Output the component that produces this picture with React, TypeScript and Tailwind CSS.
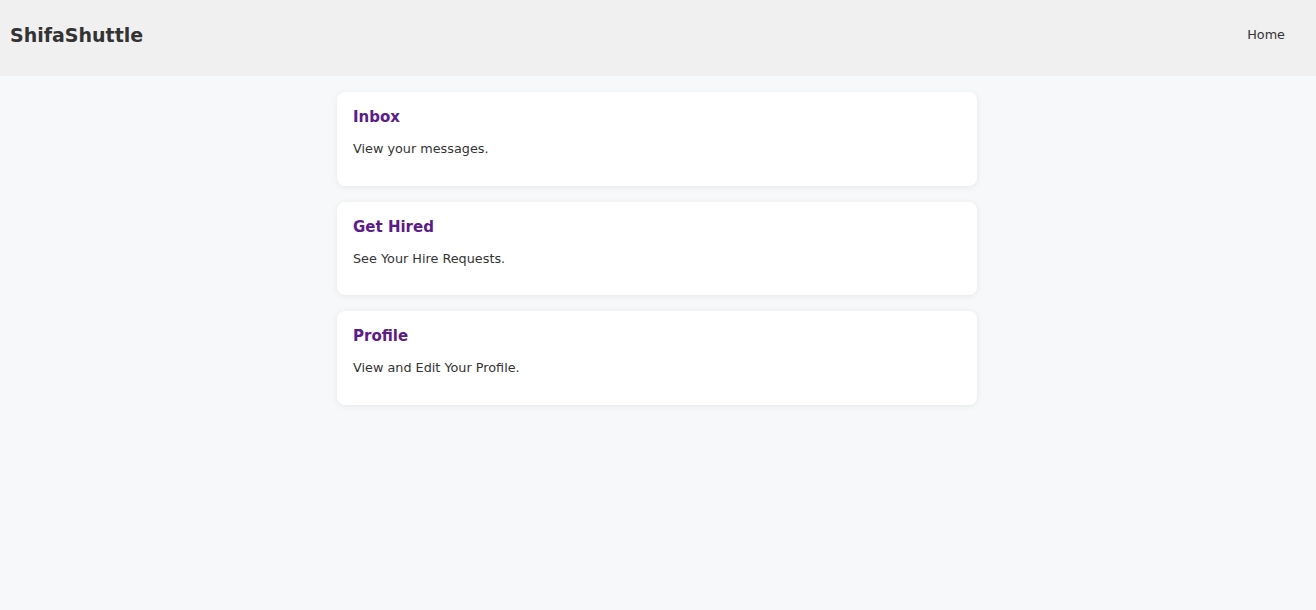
const cards = [
  { title: "Inbox", text: "View your messages." },
  { title: "Get Hired", text: "See Your Hire Requests." },
  { title: "Profile", text: "View and Edit Your Profile." },
];

export default function App() {
  return (
    <div className="min-h-screen bg-[#f7f8fa] font-['DejaVu_Sans',sans-serif] text-[#333]">
      {/* Top bar */}
      <header className="h-[76px] bg-[#f0f0f0]">
        <div className="flex h-[70px] items-center justify-between pl-[10px] pr-[31px]">
          <span className="text-[19px] font-bold text-[#333]">ShifaShuttle</span>
          <a href="#" className="text-[12.8px] text-[#333]">
            Home
          </a>
        </div>
      </header>

      {/* Dashboard cards */}
      <main className="mx-auto flex w-[642px] flex-col gap-4 pt-4">
        {cards.map((card) => (
          <div
            key={card.title}
            className="h-[93.6px] w-[640px] rounded-lg bg-white p-4 shadow-[0_1px_6px_rgba(0,0,0,0.07)]"
          >
            <h3 className="text-[15px] leading-[18px] font-bold text-[#5c1a8c]">{card.title}</h3>
            <p className="mt-[15px] text-[12.8px] leading-[16px] text-[#333]">{card.text}</p>
          </div>
        ))}
      </main>
    </div>
  );
}
